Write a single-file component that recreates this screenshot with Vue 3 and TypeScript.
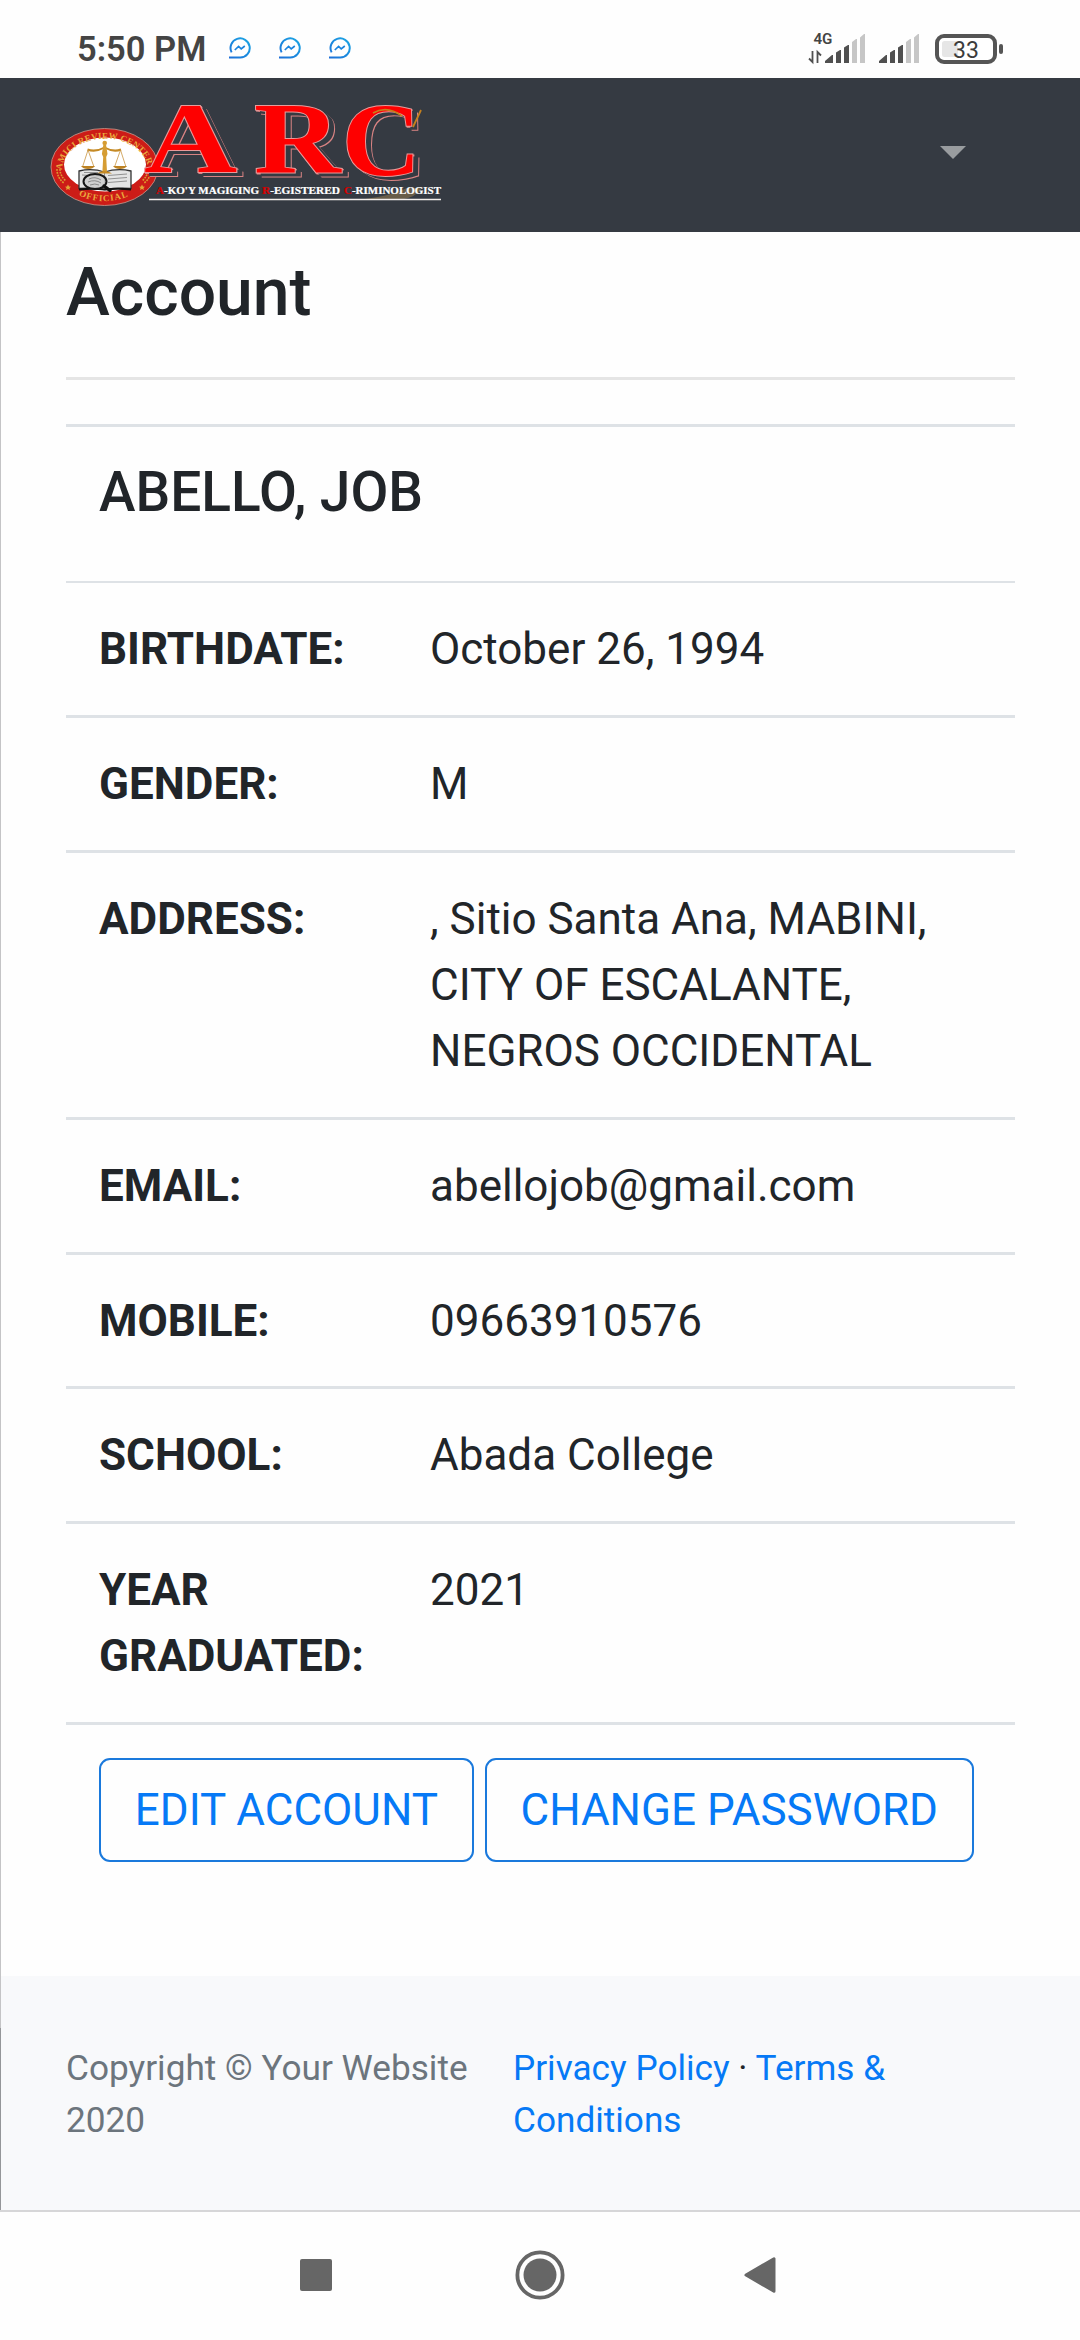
<script setup lang="ts">
interface Row {
  label: string
  value: string
}

const rows: Row[] = [
  { label: 'BIRTHDATE:', value: 'October 26, 1994' },
  { label: 'GENDER:', value: 'M' },
  { label: 'ADDRESS:', value: ', Sitio Santa Ana, MABINI, CITY OF ESCALANTE, NEGROS OCCIDENTAL' },
  { label: 'EMAIL:', value: 'abellojob@gmail.com' },
  { label: 'MOBILE:', value: '09663910576' },
  { label: 'SCHOOL:', value: 'Abada College' },
  { label: 'YEAR GRADUATED:', value: '2021' },
]

const notifications = [1, 2, 3]
</script>

<template>
  <div class="screen">
    <header class="status">
      <span class="clock">5:50 PM</span>
      <div class="notes">
        <svg v-for="n in notifications" :key="n" width="23" height="24" viewBox="0 0 23 24" fill="none">
          <defs>
            <linearGradient :id="'msg' + n" x1="0" y1="1" x2="1" y2="0">
              <stop offset="0" stop-color="#1c6fd8" />
              <stop offset="1" stop-color="#1ba6e4" />
            </linearGradient>
          </defs>
          <path d="M3.6 16.4A9.6 9.6 0 1 1 12.2 21.6H1" :stroke="`url(#msg${n})`" stroke-width="2" />
          <path d="M6.8 14l3.8-3.6 2.6 2.4 3.6-2.8" stroke="#1b84de" stroke-width="1.7" />
        </svg>
      </div>
      <svg class="system" width="200" height="48" viewBox="805 24 200 48">
        <text x="813.4" y="44" class="net" textLength="19" lengthAdjust="spacingAndGlyphs">4G</text>
        <path d="M812.5 51v11l-3.500-3.500M817.500 63V52l3.500 3.500" fill="none" stroke="#505050" stroke-width="1.800" />
        <g fill="#505050">
          <path d="M825 63v-2l7-6h1v8zM836 63V52.500l4-2.500h1v13zM844 63V47.500l4-2.500h1v18z" />
          <path d="M879 63v-2l7-6h1v8zM890 63V52.500l4-2.500h1v13zM898 63V47.500l4-2.500h1v18z" />
        </g>
        <g fill="#c6c6c6">
          <path d="M852 63V42l4-3h1v24zM860 63V37.500l4-3.500h1v29z" />
          <path d="M906 63V42l4-3h1v24zM914 63V37.500l4-3.500h1v29z" />
        </g>
        <rect x="937" y="36" width="58" height="26" rx="7" fill="#fff" stroke="#555" stroke-width="4" />
        <rect x="942" y="41" width="16" height="16" rx="2.500" fill="#e6e6e6" />
        <rect x="999" y="44" width="4" height="10" rx="2" fill="#555" />
        <text x="966" y="58" class="pct" text-anchor="middle">33</text>
      </svg>
    </header>

    <nav class="topnav">
      <svg class="brand" width="400" height="154" viewBox="48 78 400 154">
        <defs>
          <path id="sealTop" d="M62.500 175A43 31.500 0 1 1 147.500 175" />
          <path id="sealBottom" d="M64 183A46 34.500 0 0 0 145 183" />
          <linearGradient id="gold" x1="0" x2="1">
            <stop offset="0" stop-color="#b9791a" />
            <stop offset=".5" stop-color="#f6cf6a" />
            <stop offset="1" stop-color="#b9791a" />
          </linearGradient>
        </defs>
        <!-- seal -->
        <ellipse cx="104.500" cy="167" rx="53.500" ry="38.500" fill="#cc1c17" stroke="#c99a8e" stroke-width=".8" />
        <ellipse cx="105" cy="164.500" rx="41" ry="27" fill="#fff" />
        <text class="ring"><textPath href="#sealTop" startOffset="5" textLength="112">AMICI REVIEW CENTER</textPath></text>
        <text class="ring"><textPath href="#sealBottom" startOffset="19" textLength="51">OFFICIAL</textPath></text>
        <path d="M57 169q0 9 7 14M60 169q0 7 6 12M151 169q0 9-7 14M148 169q0 7-6 12" fill="none" stroke="#dc9a2e" stroke-width="1.600" stroke-dasharray="1.800 1" />
        <path d="M67 186.500l1-2 1 2 2 .3-1.500 1.200.3 2-1.800-1-1.800 1 .3-2-1.500-1.200zM141 186.500l1-2 1 2 2 .3-1.500 1.200.3 2-1.800-1-1.800 1 .3-2-1.500-1.200z" fill="#e4a738" />
        <!-- open book -->
        <path d="M79 171q13-3 25.500 1 13-4 26.500-1v17.500q-13-1-26.500 1-12.500-2-25.500-1z" fill="#e4e4e4" stroke="#333" stroke-width="1.300" />
        <path d="M104.500 172v17M108 175.500l19-1.500M108 179l19-1.500M108 182.500l19-1.500M82 175l18 1M84 172.500h14" stroke="#888" stroke-width=".9" />
        <path d="M79 189.500q13-1.500 26 0 13-1.500 26 0" fill="none" stroke="#111" stroke-width="2" />
        <!-- scales -->
        <g fill="none" stroke="url(#gold)">
          <path d="M87.500 149.500q8 3 17-2 9 5 16.500 2" stroke="#c58a25" stroke-width="2" />
          <path d="M88 150l-5.500 17M88 150l6 17M120.500 150l-6 17M120.500 150l5.500 17" stroke="#c99642" stroke-width=".8" />
        </g>
        <path d="M103.300 145h2.800l1.400 9-1.300 3 .8 15h-4.600l.8-15-1.300-3z" fill="#d69d33" />
        <circle cx="104.700" cy="143" r="2.300" fill="#d69d33" />
        <path d="M81 166h14q-2 3-7 3t-7-3zM113 166h14q-2 3-7 3t-7-3z" fill="#bd8222" />
        <path d="M97 173.500q3-2.500 7.500-2.500t7.500 2.500z" fill="#c58a25" />
        <!-- magnifier -->
        <ellipse cx="95" cy="181.500" rx="11.500" ry="7.500" fill="#c9c9c9" fill-opacity=".75" stroke="#161616" stroke-width="2" />
        <path d="M89 179q6-3 12 1M88 182q7-3 13 1M90 185q5-2 9 0" fill="none" stroke="#777" stroke-width=".8" />
        <path d="M104 186l6 4.500" stroke="#111" stroke-width="3.400" stroke-linecap="round" />
        <!-- wordmark: red letters with an outlined drop edge -->
        <g class="letters">
          <text transform="translate(144 172) scale(1.29 .99)">A</text>
          <text transform="translate(254 173) scale(1.2 1.02)">R</text>
          <text transform="translate(342 175) scale(1.09 1.04)">C</text>
        </g>
        <path d="M373 113q14-8 29 3M421 110l-8 17" fill="none" stroke="#c5801d" stroke-width="1.800" />
        <path d="M365 199q25-3 42-11h15q-5 9-22 12z" fill="#a98a50" opacity=".45" />
        <g class="tag">
          <text x="156" y="194.200" textLength="103" lengthAdjust="spacingAndGlyphs"><tspan class="initial">A</tspan>-KO'Y MAGIGING</text>
          <text x="262" y="194.200" textLength="78" lengthAdjust="spacingAndGlyphs"><tspan class="initial">R</tspan>-EGISTERED</text>
          <text x="344" y="194.200" textLength="97" lengthAdjust="spacingAndGlyphs"><tspan class="initial">C</tspan>-RIMINOLOGIST</text>
        </g>
        <path d="M149 199.500h292" stroke="#f4efec" stroke-width="1.600" />
      </svg>
      <span class="caret"></span>
    </nav>

    <div class="viewport">
      <div class="edge"><i></i><b></b></div>
      <div class="page">
        <main>
          <h1>Account</h1>
          <hr />
          <div class="table">
            <div class="row name"><h2>ABELLO, JOB</h2></div>
            <div v-for="(row, i) in rows" :key="row.label" class="row" :class="{ first: i === 0 }">
              <div class="label">{{ row.label }}</div>
              <div class="value">{{ row.value }}</div>
            </div>
            <div class="row actions">
              <button type="button">EDIT ACCOUNT</button>
              <button type="button">CHANGE PASSWORD</button>
            </div>
          </div>
        </main>
        <footer>
          <div class="copy">Copyright © Your Website 2020</div>
          <div class="links"><a>Privacy Policy</a> · <a>Terms &amp; Conditions</a></div>
        </footer>
      </div>
    </div>

    <div class="sysnav">
      <svg width="32" height="32"><rect width="32" height="32" rx="2" fill="#666" /></svg>
      <svg class="home" width="50" height="50" viewBox="0 0 50 50">
        <circle cx="25" cy="25" r="22.600" fill="none" stroke="#666" stroke-width="3.800" />
        <circle cx="25" cy="25" r="16.500" fill="#666" />
      </svg>
      <svg class="back" width="32" height="36" viewBox="0 0 32 36">
        <path d="M2 18L30 1.800V34.200z" fill="#666" stroke="#666" stroke-width="3" stroke-linejoin="round" />
      </svg>
    </div>
  </div>
</template>

<style>
body {
  margin: 0;
  background: #fff;
}
</style>

<style scoped>
.screen {
  width: 1080px;
  height: 2340px;
  overflow: hidden;
  display: flex;
  flex-direction: column;
  background: #fefefe;
  color: #212529;
  font-family: Roboto, "Liberation Sans", sans-serif;
}
svg {
  display: block;
  flex: none;
}
.status {
  height: 78px;
  display: flex;
  flex: none;
}
.clock {
  width: 150px;
  margin: 29px 0 0 77px;
  font-size: 34.5px;
  line-height: 40px;
  font-weight: 600;
  color: #444;
  white-space: nowrap;
}
.notes {
  display: flex;
  gap: 27px;
  margin: 36px 0 0 1px;
}
.system {
  margin: 24px 75px 0 auto;
}
.net {
  font-size: 15.5px;
  font-weight: 600;
  fill: #444;
}
.pct {
  font-size: 23px;
  font-weight: 400;
  fill: #3c3c3c;
}
.topnav {
  height: 154px;
  flex: none;
  display: flex;
  justify-content: space-between;
  background: #353a42;
}
.brand {
  margin-left: 48px;
  overflow: visible;
}
.ring {
  font: bold 9px "Liberation Serif", serif;
  fill: #e9a83c;
}
.letters {
  filter: drop-shadow(5px 3px 0 #353a42) drop-shadow(1px 1px 0 #d88383);
}
.letters text {
  font: bold 100px "Liberation Serif", serif;
  paint-order: stroke;
  fill: #fe0000;
  stroke: #e79a9a;
  stroke-width: 1.8px;
}
.tag text {
  font: bold 9.3px "Liberation Serif", serif;
  fill: #fff;
  stroke: #fff;
  stroke-width: 0.2px;
}
.tag .initial {
  fill: #d50000;
  stroke: #d50000;
}
.caret {
  margin: 68px 114px 0 0;
  width: 0;
  height: 0;
  border: 13.5px solid transparent;
  border-top-color: #999c9f;
  border-bottom: 0;
}
.viewport {
  height: 1978px;
  flex: none;
  display: flex;
}
.edge {
  width: 1px;
  flex: none;
  display: flex;
  flex-direction: column;
}
.edge i {
  height: 1796px;
  background: #c4c4c6;
}
.edge b {
  flex: 1;
  background: #949699;
}
.page {
  flex: 1;
  display: flex;
  flex-direction: column;
  justify-content: space-between;
}
main {
  padding: 21px 65px 0;
}
h1 {
  margin: 0;
  font-size: 66px;
  line-height: 79px;
  font-weight: 500;
}
hr {
  margin: 45px 0 44px;
  height: 3px;
  border: 0;
  background: #e5e5e5;
}
.row {
  display: flex;
  padding: 33px 33px 32.75px;
  border-top: 3px solid #dee2e6;
  font-size: 44px;
  line-height: 66px;
}
.row.name {
  padding-top: 32px;
  padding-bottom: 55.5px;
}
.row.first {
  border-top-width: 2px;
  padding-top: 33px;
  padding-bottom: 33.75px;
}
h2 {
  margin: 0;
  font-size: 55px;
  line-height: 66px;
  font-weight: 500;
}
.label {
  flex: none;
  width: 265px;
  margin-right: 66px;
  font-weight: 700;
}
.value {
  width: 520px;
}
.actions {
  gap: 11px;
}
button {
  box-sizing: border-box;
  height: 104px;
  padding: 0 33.8px;
  border: 2px solid #1a79dc;
  border-radius: 11px;
  background: none;
  color: #0679f6;
  font: 400 44px/66px Roboto, "Liberation Sans", sans-serif;
  white-space: nowrap;
}
footer {
  box-sizing: border-box;
  height: 234px;
  padding: 65.6px 65px 0;
  display: flex;
  background: #f8f9fb;
  font-size: 35.2px;
  line-height: 52.4px;
}
.copy {
  flex: none;
  width: 447px;
  color: #6c757d;
}
.links {
  width: 440px;
}
a {
  color: #0679f6;
}
.sysnav {
  box-sizing: border-box;
  height: 130px;
  flex: none;
  display: flex;
  align-items: flex-start;
  padding: 47px 0 0 300px;
  border-top: 2px solid #d6d6d8;
}
.home {
  margin: -9px 0 0 183px;
}
.back {
  margin: -2px 0 0 179px;
}
</style>
